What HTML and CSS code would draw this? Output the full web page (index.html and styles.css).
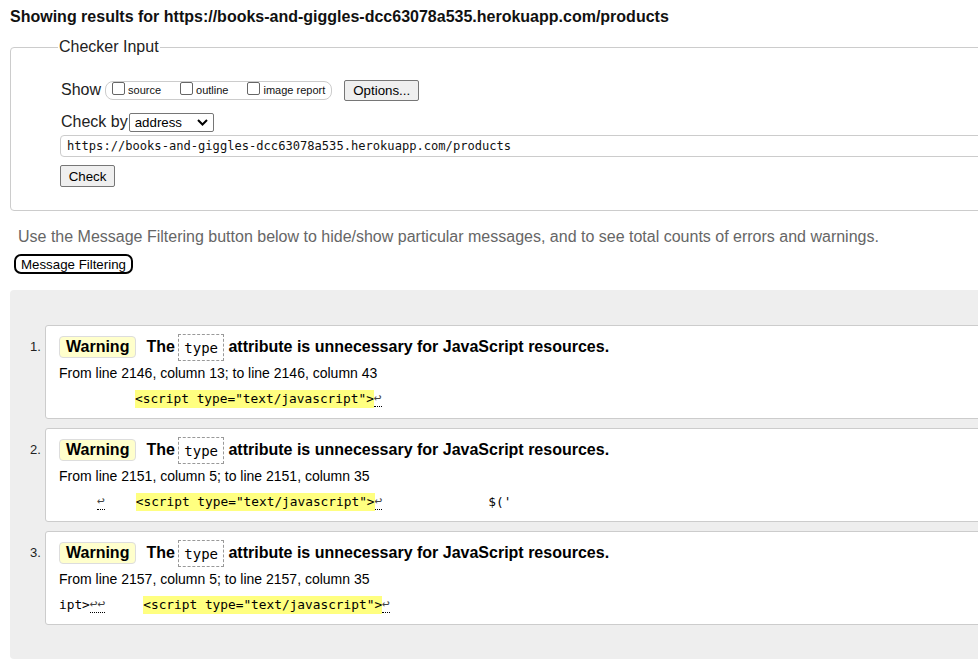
FILE: index.html
```html
<!DOCTYPE html>
<html>
<head>
<meta charset="utf-8">
<link rel="stylesheet" href="styles.css">
</head>
<body>
<div class="page">
  <h2 class="title">Showing results for https://books-and-giggles-dcc63078a535.herokuapp.com/products</h2>

  <fieldset class="checker">
    <legend>Checker Input</legend>
    <div class="row show-row">
      <span class="lbl">Show</span>
      <span class="opts">
        <label><span class="cb"></span>source</label>
        <label><span class="cb"></span>outline</label>
        <label><span class="cb"></span>image report</label>
      </span>
      <span class="btn options">Options...</span>
    </div>
    <div class="row check-row">
      <span class="lbl">Check by</span>
      <span class="select">address<svg class="chev" width="11" height="7" viewBox="0 0 11 7"><path d="M1 1 L5.5 5.5 L10 1" fill="none" stroke="#000" stroke-width="2"/></svg></span>
    </div>
    <div class="url">https://books-and-giggles-dcc63078a535.herokuapp.com/products</div>
    <div class="row"><span class="btn check">Check</span></div>
  </fieldset>

  <p class="hint">Use the Message Filtering button below to hide/show particular messages, and to see total counts of errors and warnings.</p>
  <div class="filter-wrap"><span class="filter">Message Filtering</span></div>

  <div class="results">
    <ol class="msgs">
      <li class="msg">
        <span class="num">1.</span>
        <div class="box">
          <p class="head"><span class="badge">Warning</span><span class="txt">The <code class="attr">type</code> attribute is unnecessary for JavaScript resources.</span></p>
          <p class="loc">From line 2146, column 13; to line 2146, column 43</p>
          <p class="ext"><span class="pad1"></span><mark>&lt;script type="text/javascript"&gt;</mark><span class="ret">↩</span></p>
        </div>
      </li>
      <li class="msg">
        <span class="num">2.</span>
        <div class="box">
          <p class="head"><span class="badge">Warning</span><span class="txt">The <code class="attr">type</code> attribute is unnecessary for JavaScript resources.</span></p>
          <p class="loc">From line 2151, column 5; to line 2151, column 35</p>
          <p class="ext"><span class="pad2"></span><span class="ret">↩</span><span class="sp2"></span><mark>&lt;script type="text/javascript"&gt;</mark><span class="ret">↩</span><span class="sp3"></span>$('</p>
        </div>
      </li>
      <li class="msg">
        <span class="num">3.</span>
        <div class="box">
          <p class="head"><span class="badge">Warning</span><span class="txt">The <code class="attr">type</code> attribute is unnecessary for JavaScript resources.</span></p>
          <p class="loc">From line 2157, column 5; to line 2157, column 35</p>
          <p class="ext">ipt&gt;<span class="ret">↩↩</span><span class="sp4"></span><mark>&lt;script type="text/javascript"&gt;</mark><span class="ret">↩</span></p>
        </div>
      </li>
    </ol>
  </div>
</div>
</body>
</html>
```

FILE: styles.css
```css
html, body {
  margin: 0;
  padding: 0;
  overflow: hidden;
  background: #fff;
}
body {
  font-family: "Liberation Sans", Arial, sans-serif;
  color: #000;
}
.page {
  width: 1200px;
  padding: 0 0 0 10px;
}
.title {
  font-size: 16px;
  font-weight: bold;
  margin: 0;
  padding-top: 7px;
  height: 19px;
  line-height: 19px;
  color: #111;
}
.checker {
  margin: 11px 0 0 0;
  padding: 0 0 0 49px;
  width: 1100px;
  border: 1px solid #ccc;
  border-radius: 4px;
  height: 174px;
  box-sizing: border-box;
}
.checker legend {
  font-size: 16px;
  color: #222;
  padding: 0 1px;
  margin-left: -2px;
  line-height: 20px;
}
.row {
  display: flex;
  align-items: center;
}
.show-row {
  margin-top: 22px;
  height: 22px;
}
.lbl {
  font-size: 16px;
  color: #222;
  margin-left: 1px;
}
.opts {
  display: inline-flex;
  align-items: center;
  margin-left: 4px;
  height: 17px;
  border: 1px solid #ccc;
  border-radius: 8px;
  padding: 0 6px 0 6px;
}
.opts label {
  display: inline-flex;
  align-items: center;
  font-size: 11px;
  color: #111;
  margin-right: 19px;
}
.opts label:last-child { margin-right: 0; }
.cb {
  width: 11px;
  height: 11px;
  border: 1px solid #666;
  border-radius: 2px;
  margin-right: 3px;
  position: relative;
  top: -2px;
}
.btn {
  display: inline-flex;
  align-items: center;
  justify-content: center;
  font-size: 13.3px;
  border: 1px solid #767676;
  background: #efefef;
  border-radius: 2px;
  box-sizing: border-box;
  color: #000;
}
.options {
  margin-left: 12px;
  width: 75px;
  height: 21px;
}
.check-row {
  margin-top: 11px;
  height: 20px;
}
.select {
  display: inline-flex;
  align-items: center;
  justify-content: space-between;
  box-sizing: border-box;
  width: 85px;
  height: 19px;
  border: 1px solid #767676;
  border-radius: 2px;
  font-size: 13.3px;
  padding: 0 5px 0 5px;
  margin-left: 1px;
  background: #fff;
}
.url {
  margin-top: 3px;
  height: 22px;
  box-sizing: border-box;
  border: 1px solid #ccc;
  border-radius: 4px;
  font-family: "DejaVu Sans Mono", "Liberation Mono", monospace;
  font-size: 12.1px;
  line-height: 20px;
  padding-left: 6px;
  margin-left: 0;
  margin-right: -20px;
  color: #111;
}
.check {
  margin-top: 8px;
  width: 55px;
  height: 22px;
}
.hint {
  margin: 16px 0 0 8px;
  font-size: 16px;
  color: #666;
  line-height: 20px;
}
.filter-wrap {
  margin-top: 7px;
  height: 20px;
  margin-left: 4px;
}
.filter {
  display: inline-flex;
  align-items: center;
  box-sizing: border-box;
  height: 20px;
  padding: 0 5px;
  border: 2px solid #000;
  border-radius: 7px;
  font-size: 13.3px;
}
.results {
  margin-top: 16px;
  background: #eee;
  border-radius: 4px;
  height: 369px;
  padding: 35px 0 0 20px;
  box-sizing: border-box;
}
.msgs {
  list-style: none;
  margin: 0;
  padding: 0;
}
.msg {
  display: flex;
  align-items: flex-start;
  margin-bottom: 9px;
}
.num {
  width: 15px;
  font-size: 13px;
  color: #222;
  padding-top: 14px;
}
.box {
  flex: 1;
  box-sizing: border-box;
  height: 94px;
  background: #fff;
  border: 1px solid #ccc;
  border-radius: 3px;
  padding: 10px 0 0 13px;
}
.box p { margin: 0; }
.head {
  display: flex;
  align-items: center;
  height: 22px;
}
.badge {
  display: inline-flex;
  align-items: center;
  box-sizing: border-box;
  height: 22px;
  padding: 0 6px;
  background: #ffffcc;
  border: 1px solid #ddd;
  border-radius: 4px;
  font-weight: bold;
  font-size: 16px;
}
.txt {
  margin-left: 10px;
  font-weight: bold;
  font-size: 16px;
}
.attr {
  display: inline-block;
  font-family: "DejaVu Sans Mono", "Liberation Mono", monospace;
  font-weight: normal;
  font-size: 14px;
  border: 1px dashed #999;
  padding: 3px 5px 2px 5px;
  line-height: 20px;
  vertical-align: middle;
  margin: 0 0 0 -1px;
}
.loc {
  font-size: 14px;
  margin-top: 7px !important;
  line-height: 17px;
}
.ext {
  margin-top: 8px !important;
  font-family: "DejaVu Sans Mono", "Liberation Mono", monospace;
  font-size: 12.8px;
  line-height: 18px;
  white-space: pre;
  display: flex;
}
mark {
  background: #ffff80;
  color: #000;
}
.ret {
  color: #444;
  border-bottom: 1px dotted #000;
  line-height: 16px;
  height: 16px;
}
.pad1 { width: 76px; }
.pad2 { width: 38px; }
.sp2 { width: 31px; }
.sp3 { width: 106px; }
.sp4 { width: 38px; }
```
